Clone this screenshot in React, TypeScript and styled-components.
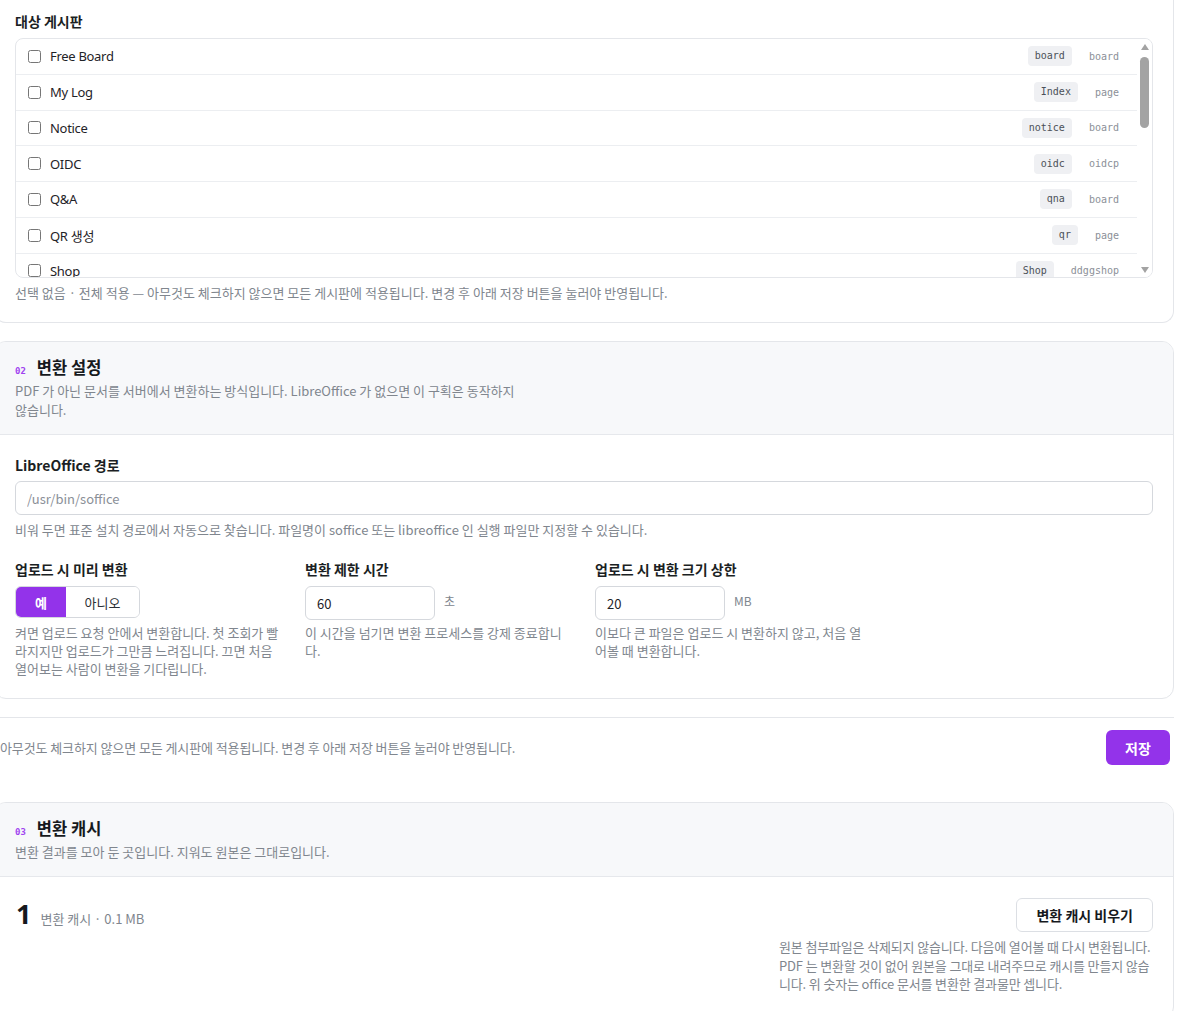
import React from "react";
import styled, { createGlobalStyle } from "styled-components";

const GlobalStyle = createGlobalStyle`
  html, body { margin: 0; padding: 0; background: #ffffff; }
  body {
    font-family: "Noto Sans", "Noto Sans CJK KR", sans-serif;
    color: #1f2328;
    overflow: hidden;
  }
  * { box-sizing: border-box; }
`;

const KR = `"Noto Sans CJK KR", sans-serif`;

const Page = styled.div`
  width: 1180px;
  margin-left: -6px;
  display: flex;
  flex-direction: column;
  gap: 18px;
`;

const Card = styled.section<{ $cutTop?: boolean }>`
  background: #fff;
  border: 1px solid #e4e6ea;
  border-top: ${(p) => (p.$cutTop ? "none" : "1px solid #e4e6ea")};
  border-radius: ${(p) => (p.$cutTop ? "0 0 12px 12px" : "12px")};
  overflow: hidden;
`;

const TopBody = styled.div`
  padding: 12px 20px 20px;
`;

const FieldLabel = styled.div`
  font-family: ${KR};
  font-size: 14px;
  font-weight: 600;
  line-height: 18px;
  color: #1b1f24;
`;

const Help = styled.div<{ $mt?: number }>`
  font-family: ${KR};
  font-size: 13px;
  line-height: 18px;
  color: #80868e;
  margin-top: ${(p) => p.$mt ?? 6}px;
`;

const ListBox = styled.div`
  margin-top: 8px;
  height: 240px;
  border: 1px solid #e4e6ea;
  border-radius: 8px;
  overflow: hidden;
  display: flex;
`;

const Rows = styled.div`
  flex: 1;
  min-width: 0;
  overflow: hidden;
`;

const ScrollTrack = styled.div`
  width: 15px;
  flex: none;
  display: flex;
  flex-direction: column;
  align-items: center;
  background: #fff;
`;

const ScrollArrow = styled.div`
  height: 15px;
  width: 15px;
  display: flex;
  align-items: center;
  justify-content: center;
  flex: none;
`;

const ScrollRail = styled.div`
  flex: 1;
  width: 100%;
  display: flex;
  justify-content: center;
`;

const ScrollThumb = styled.div`
  width: 9px;
  height: 71px;
  margin-top: 3px;
  border-radius: 5px;
  background: #a3a3a3;
`;

const Row = styled.label`
  display: flex;
  align-items: center;
  height: 35.75px;
  padding: 0 18px 0 12px;
  border-bottom: 1px solid #eceef1;
  gap: 9px;
`;

const Check = styled.input`
  width: 13px;
  height: 13px;
  margin: 0;
  flex: none;
`;

const RowName = styled.span`
  flex: 1;
  font-size: 13px;
  letter-spacing: -0.3px;
  color: #1f2328;
`;

const Chip = styled.span`
  font-family: "DejaVu Sans Mono", monospace;
  font-size: 10px;
  line-height: 14px;
  color: #4b5058;
  background: #eff0f3;
  border-radius: 4px;
  padding: 3px 7px;
`;

const Kind = styled.span`
  font-family: "DejaVu Sans Mono", monospace;
  font-size: 10px;
  color: #8b9098;
  margin-left: 8px;
`;

const SectionHead = styled.div`
  background: #f7f8fa;
  border-bottom: 1px solid #e6e8ec;
  padding: 13px 20px 15px;
`;

const TitleRow = styled.div`
  display: flex;
  align-items: baseline;
  gap: 11px;
  height: 24px;
`;

const Num = styled.span`
  font-family: "DejaVu Sans Mono", monospace;
  font-size: 9px;
  font-weight: 700;
  line-height: 24px;
  color: #a043f0;
`;

const Title = styled.h2`
  margin: 0;
  font-family: ${KR};
  font-size: 16.5px;
  font-weight: 700;
  line-height: 24px;
  color: #16191d;
`;

const Desc = styled.p`
  margin: 2px 0 0;
  max-width: 530px;
  word-break: keep-all;
  font-family: ${KR};
  font-size: 13px;
  line-height: 19px;
  color: #80868e;
`;

const SectionBody = styled.div`
  padding: 21px 20px 20px;
`;

const TextInput = styled.input<{ $w?: number }>`
  display: block;
  width: ${(p) => (p.$w ? `${p.$w}px` : "100%")};
  height: 34px;
  margin-top: 7px;
  padding: 0 11px;
  border: 1px solid #d5d8dd;
  border-radius: 6px;
  font-family: ${KR};
  font-size: 13px;
  color: #1f2328;
  background: #fff;
  outline: none;
  &::placeholder { color: #8b9098; }
`;

const Grid = styled.div`
  display: grid;
  grid-template-columns: repeat(3, 268px);
  column-gap: 22px;
  margin-top: 21px;
`;

const Col = styled.div`
  display: flex;
  flex-direction: column;
`;

const Segmented = styled.div`
  display: inline-flex;
  align-self: flex-start;
  margin-top: 8px;
  height: 32px;
  border: 1px solid #d5d8dd;
  border-radius: 6px;
  overflow: hidden;
`;

const SegBtn = styled.button<{ $on?: boolean; $w: number }>`
  width: ${(p) => p.$w}px;
  border: none;
  margin: 0;
  padding: 0;
  font-family: ${KR};
  font-size: 13px;
  font-weight: ${(p) => (p.$on ? 600 : 400)};
  background: ${(p) => (p.$on ? "#9333ea" : "#fff")};
  color: ${(p) => (p.$on ? "#fff" : "#2b2f35")};
`;

const InputRow = styled.div`
  display: flex;
  align-items: flex-start;
  gap: 9px;
  margin-top: 1px;
`;

const Unit = styled.span`
  font-family: ${KR};
  font-size: 12px;
  color: #80868e;
  padding-top: 13px;
`;

const SaveBar = styled.div`
  display: flex;
  align-items: center;
  justify-content: space-between;
  margin-left: 6px;
  width: 1174px;
  border-top: 1px solid #e4e6ea;
  padding: 12px 4px 19px 0;
`;

const SaveText = styled.span`
  font-family: ${KR};
  font-size: 13px;
  letter-spacing: -0.1px;
  color: #80868e;
`;

const PrimaryBtn = styled.button`
  width: 64px;
  height: 35px;
  border: none;
  border-radius: 6px;
  background: #9333ea;
  color: #fff;
  font-family: ${KR};
  font-size: 14px;
  font-weight: 700;
`;

const CacheBody = styled.div`
  display: flex;
  justify-content: space-between;
  align-items: flex-start;
  padding: 21px 20px 24px;
`;

const Stat = styled.div`
  display: flex;
  align-items: baseline;
  gap: 9px;
  padding-top: 1px;
  padding-left: 1px;
`;

const StatNum = styled.span`
  font-family: "Noto Sans", sans-serif;
  font-size: 27px;
  font-weight: 700;
  line-height: 30px;
  color: #16191d;
`;

const StatLabel = styled.span`
  font-family: ${KR};
  font-size: 13px;
  color: #80868e;
`;

const RightCol = styled.div`
  display: flex;
  flex-direction: column;
  align-items: flex-end;
`;

const GhostBtn = styled.button`
  height: 34px;
  padding: 0 19px;
  border: 1px solid #dcdfe4;
  border-radius: 6px;
  background: #fff;
  color: #16191d;
  font-family: ${KR};
  font-size: 14px;
  font-weight: 700;
`;

const RightNote = styled(Help)`
  width: 374px;
  line-height: 18.5px;
  letter-spacing: -0.15px;
`;

const boards: [string, string, string][] = [
  ["Free Board", "board", "board"],
  ["My Log", "Index", "page"],
  ["Notice", "notice", "board"],
  ["OIDC", "oidc", "oidcp"],
  ["Q&A", "qna", "board"],
  ["QR 생성", "qr", "page"],
  ["Shop", "Shop", "ddggshop"],
  ["Tags", "tags", "page"],
  ["Wiki", "wiki", "board"],
];

const Tri = ({ up }: { up?: boolean }) => (
  <svg width="8" height="6" viewBox="0 0 8 6">
    <polygon points={up ? "4,0 8,6 0,6" : "0,0 8,0 4,6"} fill="#a3a3a3" />
  </svg>
);

export default function App() {
  return (
    <>
      <GlobalStyle />
      <Page>
        <Card $cutTop>
          <TopBody>
            <FieldLabel>대상 게시판</FieldLabel>
            <ListBox>
              <Rows>
                {boards.map(([name, mid, kind]) => (
                  <Row key={mid}>
                    <Check type="checkbox" />
                    <RowName>{name}</RowName>
                    <Chip>{mid}</Chip>
                    <Kind>{kind}</Kind>
                  </Row>
                ))}
              </Rows>
              <ScrollTrack>
                <ScrollArrow>
                  <Tri up />
                </ScrollArrow>
                <ScrollRail>
                  <ScrollThumb />
                </ScrollRail>
                <ScrollArrow>
                  <Tri />
                </ScrollArrow>
              </ScrollTrack>
            </ListBox>
            <Help>
              선택 없음 · 전체 적용 — 아무것도 체크하지 않으면 모든 게시판에 적용됩니다. 변경 후 아래 저장 버튼을 눌러야 반영됩니다.
            </Help>
          </TopBody>
        </Card>

        <Card>
          <SectionHead>
            <TitleRow>
              <Num>02</Num>
              <Title>변환 설정</Title>
            </TitleRow>
            <Desc>
              PDF 가 아닌 문서를 서버에서 변환하는 방식입니다. LibreOffice 가 없으면 이 구획은 동작하지 않습니다.
            </Desc>
          </SectionHead>
          <SectionBody>
            <FieldLabel>LibreOffice 경로</FieldLabel>
            <TextInput placeholder="/usr/bin/soffice" />
            <Help>
              비워 두면 표준 설치 경로에서 자동으로 찾습니다. 파일명이 soffice 또는 libreoffice 인 실행 파일만 지정할 수 있습니다.
            </Help>
            <Grid>
              <Col>
                <FieldLabel>업로드 시 미리 변환</FieldLabel>
                <Segmented>
                  <SegBtn $on $w={50}>예</SegBtn>
                  <SegBtn $w={73}>아니오</SegBtn>
                </Segmented>
                <Help>
                  켜면 업로드 요청 안에서 변환합니다. 첫 조회가 빨라지지만 업로드가 그만큼 느려집니다. 끄면 처음 열어보는 사람이 변환을 기다립니다.
                </Help>
              </Col>
              <Col>
                <FieldLabel>변환 제한 시간</FieldLabel>
                <InputRow>
                  <TextInput $w={130} defaultValue="60" />
                  <Unit>초</Unit>
                </InputRow>
                <Help $mt={4}>이 시간을 넘기면 변환 프로세스를 강제 종료합니다.</Help>
              </Col>
              <Col>
                <FieldLabel>업로드 시 변환 크기 상한</FieldLabel>
                <InputRow>
                  <TextInput $w={130} defaultValue="20" />
                  <Unit>MB</Unit>
                </InputRow>
                <Help $mt={4}>이보다 큰 파일은 업로드 시 변환하지 않고, 처음 열어볼 때 변환합니다.</Help>
              </Col>
            </Grid>
          </SectionBody>
        </Card>

        <SaveBar>
          <SaveText>아무것도 체크하지 않으면 모든 게시판에 적용됩니다. 변경 후 아래 저장 버튼을 눌러야 반영됩니다.</SaveText>
          <PrimaryBtn>저장</PrimaryBtn>
        </SaveBar>

        <Card>
          <SectionHead>
            <TitleRow>
              <Num>03</Num>
              <Title>변환 캐시</Title>
            </TitleRow>
            <Desc>변환 결과를 모아 둔 곳입니다. 지워도 원본은 그대로입니다.</Desc>
          </SectionHead>
          <CacheBody>
            <Stat>
              <StatNum>1</StatNum>
              <StatLabel>변환 캐시 · 0.1 MB</StatLabel>
            </Stat>
            <RightCol>
              <GhostBtn>변환 캐시 비우기</GhostBtn>
              <RightNote>
                원본 첨부파일은 삭제되지 않습니다. 다음에 열어볼 때 다시 변환됩니다. PDF 는 변환할 것이 없어 원본을 그대로 내려주므로 캐시를 만들지 않습니다. 위 숫자는 office 문서를 변환한 결과물만 셉니다.
              </RightNote>
            </RightCol>
          </CacheBody>
        </Card>
      </Page>
    </>
  );
}
